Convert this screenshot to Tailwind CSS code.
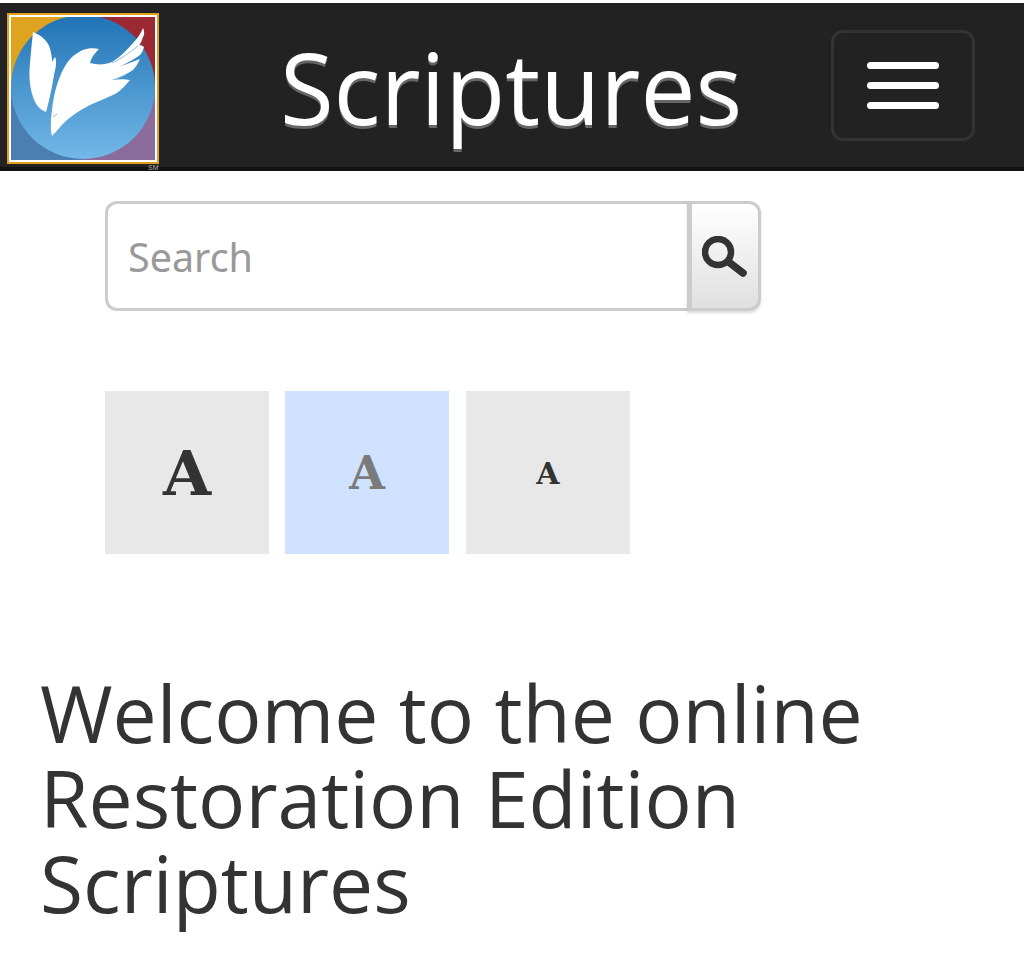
<!DOCTYPE html>
<html lang="en">
<head>
    <meta charset="UTF-8" />
    <title>Scriptures</title>
    <script src="https://cdn.jsdelivr.net/npm/@tailwindcss/browser@4"></script>
</head>
<body class="bg-white h-[961px] overflow-hidden font-['Noto_Sans',sans-serif]">
    <!-- header -->
    <header class="mt-[3px] h-[168px] bg-[#222222] border-b-[4px] border-[#111111] flex items-start">
        <div class="relative w-[175px] h-[164px] shrink-0 pl-[7px] pt-[10px]">
            <svg width="152" height="151" viewBox="0 0 152 151" class="block">
                <defs>
                    <linearGradient id="disc" x1="0" y1="0" x2="0" y2="1">
                        <stop offset="0" stop-color="#2173b5" />
                        <stop offset="1" stop-color="#72b8e8" />
                    </linearGradient>
                </defs>
                <rect x="0" y="0" width="152" height="151" fill="#dfa11c" />
                <rect x="3" y="3" width="73" height="73" fill="#dea41f" />
                <rect x="76" y="3" width="73" height="73" fill="#9b2933" />
                <rect x="3" y="76" width="73" height="72" fill="#4b7fb2" />
                <rect x="76" y="76" width="73" height="72" fill="#8a6b9c" />
                <circle cx="76" cy="74" r="72" fill="url(#disc)" />
                <rect x="3" y="3" width="146" height="145" fill="none" stroke="#ffffff" stroke-width="2" />
                <path d="M26 19 C36 23 43 30 44 40 C45 44 45 47 45 49 C46 47 47 45 48 44 C50 48 49 54 47 62 C45 75 42 88 39 99 C33 97 28 91 26 84 C22 72 22 60 23 50 C24 38 25 28 26 19 Z" fill="#ffffff" />
                <path d="M45 123 C43 115 44 106 45 97 C47 78 52 62 60 50 C65 43 71 39 76 37 C81 35 87 35 92 36 C89 39 85 43 83 50 C90 52 98 52 105 49 C113 44 120 37 126 30 C130 26 134 20 136 15 C138 19 137 23 136 24 C135 27 134 30 132 32 C134 32 136 33 137 34 C136 37 135 40 133 42 C128 46 120 50 112 54 C120 51 127 48 133 46 C131 50 129 54 126 57 C120 61 112 65 105 67 C111 66 118 66 123 67 C119 72 115 76 110 80 C102 84 92 88 83 92 C75 96 67 101 60 107 C55 111 50 118 45 123 Z" fill="#ffffff" />
                <path d="M105 50 C114 46 122 40 131 33 M106 67 L118 62 M46 104 L50 101" stroke="#8fc0e6" stroke-width="1" fill="none" />
            </svg>
            <span class="absolute left-[148px] top-[160px] text-[7px] leading-[9px] text-[#aaaaaa] font-['Liberation_Sans',sans-serif]">SM</span>
        </div>
        <h1 class="w-[670px] text-center text-[98px] leading-[122px] pt-[23px] ml-[1px] text-white [text-shadow:0_3px_0_#666666] font-['Open_Sans',sans-serif]">Scriptures</h1>
        <button class="mt-[27px] -ml-[15px] w-[144px] h-[111px] rounded-[12px] border-[3px] border-[#333333] flex flex-col items-center justify-center gap-[13px]">
            <span class="block w-[72px] h-[7px] rounded-full bg-white"></span>
            <span class="block w-[72px] h-[7px] rounded-full bg-white"></span>
            <span class="block w-[72px] h-[7px] rounded-full bg-white"></span>
        </button>
    </header>

    <!-- search -->
    <div class="ml-[105px] mt-[30px] flex w-[656px] h-[110px]">
        <div class="w-[582px] h-full rounded-l-[12px] border-[3px] border-r-0 border-[#cccccc] bg-white flex items-center pl-[20px] pt-[3px] text-[39.5px] text-[#999999]">Search</div>
        <button class="w-[74px] h-full rounded-r-[12px] border-[3px] border-l-[5px] border-[#cccccc] bg-gradient-to-b from-white to-[#e0e0e0] shadow-[0_2px_3px_rgba(0,0,0,0.15)] flex items-center justify-center">
            <svg width="46" height="41" viewBox="0 0 46 41">
                <circle cx="16" cy="16" r="13" fill="none" stroke="#333333" stroke-width="6.5" />
                <path d="M28 27 L41 37" stroke="#333333" stroke-width="7.5" stroke-linecap="round" />
            </svg>
        </button>
    </div>

    <!-- font size buttons -->
    <div class="ml-[105px] mt-[80px] flex font-['DejaVu_Serif',serif] font-bold">
        <div class="w-[164px] h-[163px] bg-[#e8e8e8] flex items-center justify-center pt-[2px] text-[62px] text-[#333333]">A</div>
        <div class="ml-[16px] w-[164px] h-[163px] bg-[#cfe2ff] flex items-center justify-center pt-[2px] text-[46px] text-[#7a7a7a]">A</div>
        <div class="ml-[17px] w-[164px] h-[163px] bg-[#e8e8e8] flex items-center justify-center pt-[2px] text-[30px] text-[#333333]">A</div>
    </div>

    <h2 class="ml-[40px] mt-[116px] w-[960px] text-[78.6px] leading-[85px] text-[#333333] font-['Open_Sans',sans-serif]">Welcome to the online<br />Restoration Edition<br />Scriptures</h2>
</body>
</html>
